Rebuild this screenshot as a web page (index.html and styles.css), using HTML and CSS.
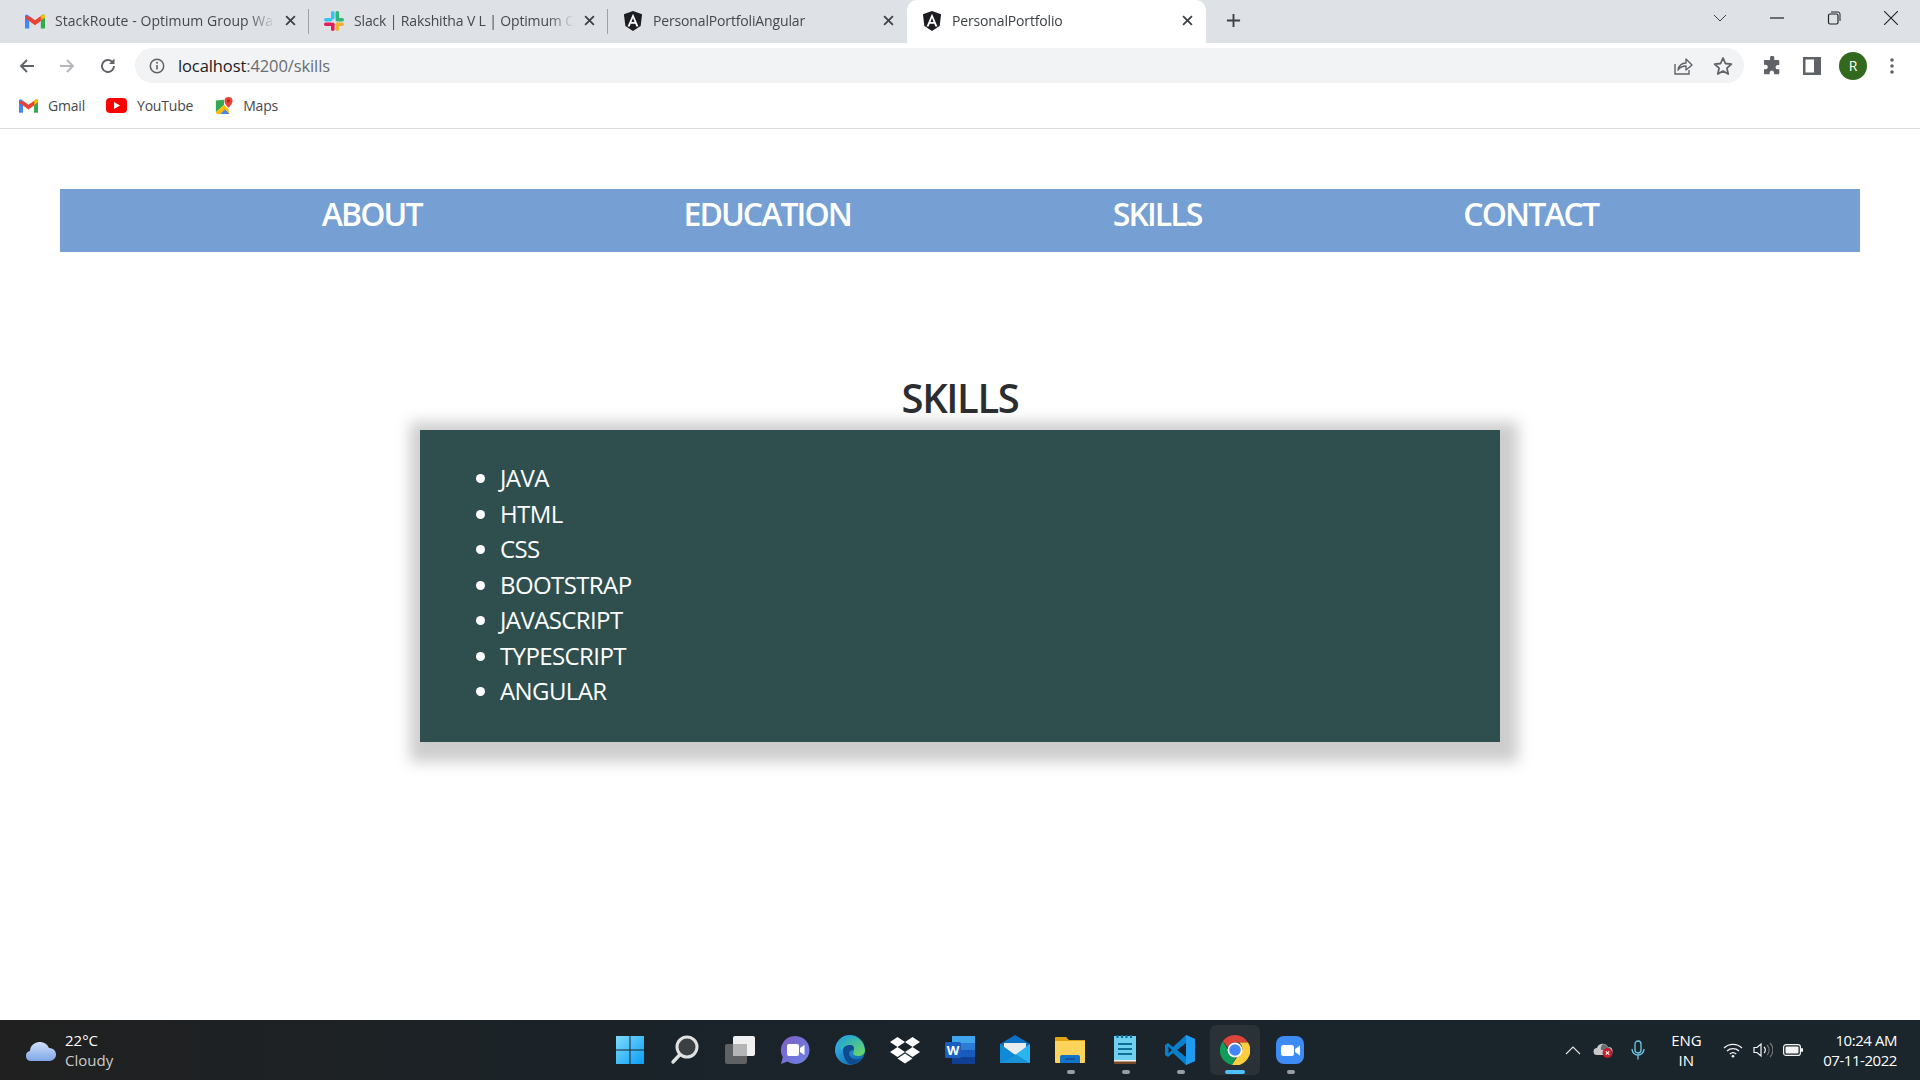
FILE: index.html
```html
<!DOCTYPE html>
<html lang="en">
<head>
  <meta charset="UTF-8" />
  <title>PersonalPortfolio</title>
  <link rel="stylesheet" href="styles.css">
</head>
<body>

<!-- Browser chrome -->
<div class="tabstrip">
  <div class="tab">
    <svg class="favicon" viewBox="0 0 24 18"><path fill="#4285F4" d="M0 18V3a2 2 0 0 1 3-1.6L5 3v15z"/><path fill="#34A853" d="M19 18V3l2-1.6A2 2 0 0 1 24 3v15z"/><path fill="#EA4335" d="M0 3l5 1 7 5 7-5 5-1-1 3-11 8L1 6z"/><path fill="#EA4335" d="M5 3l7 5 7-5v4l-7 5-7-5z"/><path fill="#FBBC04" d="M19 3l2-1.600A2 2 0 0 1 24 3v2l-5 3.500z"/></svg>
    <span class="tab-title">StackRoute - Optimum Group Wa</span>
    <svg class="tab-close" viewBox="0 0 10 10"><path d="M1 1l8 8M9 1L1 9"/></svg>
  </div>
  <div class="tab">
    <svg class="favicon" viewBox="0 0 20 20"><rect x="7" y="0" width="3.600" height="8.500" rx="1.800" fill="#36C5F0"/><rect x="0" y="7" width="8.500" height="3.600" rx="1.800" fill="#36C5F0"/><rect x="11.500" y="0" width="3.600" height="8.500" rx="1.800" fill="#2EB67D"/><rect x="11.500" y="7" width="8.500" height="3.600" rx="1.800" fill="#2EB67D"/><rect x="11.500" y="11.500" width="3.600" height="8.500" rx="1.800" fill="#ECB22E"/><rect x="11.500" y="11.500" width="8.500" height="3.600" rx="1.800" fill="#ECB22E"/><rect x="7" y="11.500" width="3.600" height="8.500" rx="1.800" fill="#E01E5A"/><rect x="0" y="11.500" width="8.500" height="3.600" rx="1.800" fill="#E01E5A"/></svg>
    <span class="tab-title">Slack | Rakshitha V L | Optimum C</span>
    <svg class="tab-close" viewBox="0 0 10 10"><path d="M1 1l8 8M9 1L1 9"/></svg>
  </div>
  <div class="tab">
    <svg class="favicon" viewBox="0 0 20 22"><path fill="#1b1d21" d="M10 0l10 3.500-1.600 13L10 22l-8.400-5.500L0 3.500z"/><path fill="#fff" d="M10 3L4 17h2.300l1.200-3h5l1.200 3H16zM8.300 12L10 7.800 11.700 12z"/></svg>
    <span class="tab-title">PersonalPortfoliAngular</span>
    <svg class="tab-close" viewBox="0 0 10 10"><path d="M1 1l8 8M9 1L1 9"/></svg>
  </div>
  <div class="tab active">
    <svg class="favicon" viewBox="0 0 20 22"><path fill="#1b1d21" d="M10 0l10 3.500-1.600 13L10 22l-8.400-5.500L0 3.500z"/><path fill="#fff" d="M10 3L4 17h2.300l1.200-3h5l1.200 3H16zM8.300 12L10 7.800 11.700 12z"/></svg>
    <span class="tab-title">PersonalPortfolio</span>
    <svg class="tab-close" viewBox="0 0 10 10"><path d="M1 1l8 8M9 1L1 9"/></svg>
  </div>
  <svg class="new-tab" viewBox="0 0 16 16"><path d="M8 1v14M1 8h14" stroke="#3c4043" stroke-width="2" fill="none"/></svg>
  <div class="window-controls">
    <svg viewBox="0 0 14 14" class="win-chevron"><path d="M1 4l6 6 6-6" fill="none" stroke="#3c4043"/></svg>
    <svg viewBox="0 0 14 14" class="win-min"><path d="M0 7h14" fill="none" stroke="#222" stroke-width="1.200"/></svg>
    <svg viewBox="0 0 14 14" class="win-max"><rect x="1.500" y="3" width="9.500" height="10" rx="1.500" fill="none" stroke="#222" stroke-width="1.200"/><path d="M4 1h7a2 2 0 0 1 2 2v7" fill="none" stroke="#222"/></svg>
    <svg viewBox="0 0 14 14" class="win-close"><path d="M0 0l14 14M14 0L0 14" fill="none" stroke="#222" stroke-width="1.100"/></svg>
  </div>
</div>

<div class="toolbar">
  <svg class="tool" viewBox="0 0 18 18"><path d="M16 9H3M9 3L3 9l6 6" fill="none" stroke="#5f6368" stroke-width="1.900"/></svg>
  <svg class="tool" viewBox="0 0 18 18"><path d="M2 9h13M9 3l6 6-6 6" fill="none" stroke="#b4b6b9" stroke-width="1.900"/></svg>
  <svg class="tool" viewBox="0 0 18 18"><path d="M15 9a6 6 0 1 1-1.800-4.300" fill="none" stroke="#5f6368" stroke-width="1.900"/><path d="M15.500 1.500v5.500H10z" fill="#5f6368"/></svg>
  <div class="omnibox">
    <svg class="info" viewBox="0 0 16 16"><circle cx="8" cy="8" r="6.700" fill="none" stroke="#5f6368" stroke-width="1.500"/><path d="M8 7v4.500" stroke="#5f6368" stroke-width="1.600"/><circle cx="8" cy="4.800" r="1" fill="#5f6368"/></svg>
    <span class="url"><span class="url-host">localhost</span>:4200/skills</span>
    <svg class="omni-icon" viewBox="0 0 20 20"><path d="M2 8v10h14v-4" fill="none" stroke="#5f6368" stroke-width="1.400"/><path d="M5 14c1-5 4-7 8-7V3l6 6-6 5v-4c-3 0-6 1-8 4z" fill="none" stroke="#5f6368" stroke-width="1.400" stroke-linejoin="round"/></svg>
    <svg class="omni-icon star" viewBox="0 0 20 20"><path d="M10 2l2.400 5.500 6 .6-4.500 4 1.300 5.900L10 15l-5.200 3 1.300-5.900-4.500-4 6-.6z" fill="none" stroke="#5f6368" stroke-width="1.800" stroke-linejoin="round"/></svg>
  </div>
  <svg class="action puzzle" viewBox="0 0 20 20"><path fill="#5f6368" d="M8 1.500a2.200 2.200 0 0 1 4.300 0V4h4a1 1 0 0 1 1 1v4h-2a2.200 2.200 0 0 0 0 4.300h2v4a1 1 0 0 1-1 1H12v-2a2.200 2.200 0 0 0-4.300 0v2H3a1 1 0 0 1-1-1v-4h1.500a2.300 2.300 0 0 0 0-4.600H2V5a1 1 0 0 1 1-1h5z"/></svg>
  <svg class="action panel" viewBox="0 0 18 18"><path fill="#5f6368" fill-rule="evenodd" d="M0 0h18v18H0zM2.500 2.500v13h8.500v-13z"/></svg>
  <div class="avatar">R</div>
  <svg class="action dots" viewBox="0 0 4 18"><circle cx="2" cy="3" r="1.800" fill="#5f6368"/><circle cx="2" cy="9" r="1.800" fill="#5f6368"/><circle cx="2" cy="15" r="1.800" fill="#5f6368"/></svg>
</div>

<div class="bookmarks">
  <div class="bookmark bm-gmail">
    <svg viewBox="0 0 24 18" class="bm-icon"><path fill="#4285F4" d="M0 18V3a2 2 0 0 1 3-1.600L5 3v15z"/><path fill="#34A853" d="M19 18V3l2-1.600A2 2 0 0 1 24 3v15z"/><path fill="#EA4335" d="M0 3l5 1 7 5 7-5 5-1-1 3-11 8L1 6z"/><path fill="#EA4335" d="M5 3l7 5 7-5v4l-7 5-7-5z"/><path fill="#FBBC04" d="M19 3l2-1.600A2 2 0 0 1 24 3v2l-5 3.500z"/></svg>
    Gmail
  </div>
  <div class="bookmark bm-youtube">
    <svg viewBox="0 0 21 15" class="bm-icon yt"><rect width="21" height="15" rx="4" fill="#f00"/><path d="M8 4l6 3.500L8 11z" fill="#fff"/></svg>
    YouTube
  </div>
  <div class="bookmark bm-maps">
    <svg viewBox="0 0 20 20" class="bm-icon maps"><path fill="#34A853" d="M1 4l9-1v6L1 17z"/><path fill="#FBBC04" d="M1 17l9-8 5 5 1 5H2z"/><path fill="#4285F4" d="M6 19l5-5 5 5z"/><path fill="#EA4335" d="M15 0a4.500 4.500 0 0 1 4.500 4.500C19.500 8 15 12 15 12s-4.500-4-4.500-7.500A4.500 4.500 0 0 1 15 0z"/><circle cx="15" cy="4.500" r="1.600" fill="#a3261b"/></svg>
    Maps
  </div>
</div>

<!-- Page content -->
<main class="content">
  <nav class="navbar">
    <a>ABOUT</a>
    <a>EDUCATION</a>
    <a>SKILLS</a>
    <a>CONTACT</a>
  </nav>

  <h1 class="section-title">SKILLS</h1>
  <div class="card">
    <ul>
      <li>JAVA</li>
      <li>HTML</li>
      <li>CSS</li>
      <li>BOOTSTRAP</li>
      <li>JAVASCRIPT</li>
      <li>TYPESCRIPT</li>
      <li>ANGULAR</li>
    </ul>
  </div>
</main>

<!-- Windows taskbar -->
<footer class="taskbar">
  <div class="weather">
    <svg class="weather-icon" viewBox="0 0 30 19"><defs><linearGradient id="cloud" x1="0" y1="0" x2="0" y2="1"><stop offset="0" stop-color="#cfe0fa"/><stop offset="1" stop-color="#7ea6e6"/></linearGradient></defs><path fill="url(#cloud)" d="M5 19a5 5 0 0 1-1-9.900A10 9 0 0 1 15 0a10 9 0 0 1 8 6 6.500 6.500 0 0 1 1 13z"/></svg>
    <div class="weather-text"><div>22°C</div><div class="weather-desc">Cloudy</div></div>
  </div>

  <div class="task-icons">
    <div class="slot">
      <svg viewBox="0 0 30 30"><defs><linearGradient id="win" x1="0" y1="0" x2="1" y2="1"><stop offset="0" stop-color="#7fdcfb"/><stop offset="1" stop-color="#0a9cf5"/></linearGradient></defs><path fill="url(#win)" d="M1 1h13.500v13.500H1zM15.500 1H29v13.500H15.500zM1 15.500h13.500V29H1zM15.500 15.500H29V29H15.500z"/></svg>
    </div>
    <div class="slot">
      <svg viewBox="0 0 30 30"><circle cx="17" cy="12" r="10" fill="#3a4044" stroke="#dfe1e2" stroke-width="3"/><path d="M9.500 20L3 27" stroke="#dfe1e2" stroke-width="3.400" stroke-linecap="round"/></svg>
    </div>
    <div class="slot">
      <svg viewBox="0 0 30 30"><rect x="0" y="9" width="22" height="20" rx="2" fill="#5f6163"/><rect x="8" y="1" width="22" height="20" rx="2" fill="#f0f0f0"/><rect x="8" y="9" width="14" height="12" fill="#b4b5b6"/></svg>
    </div>
    <div class="slot">
      <svg viewBox="0 0 30 30"><defs><linearGradient id="chat" x1="0" y1="0" x2="1" y2="1"><stop offset="0" stop-color="#7f5ec6"/><stop offset="1" stop-color="#6a85e4"/></linearGradient></defs><path fill="url(#chat)" d="M15.500 1a14 14 0 1 1-8 25.500L1 29l1.800-7A14 14 0 0 1 15.500 1z"/><rect x="7" y="9" width="12" height="12" rx="2" fill="#fff"/><path d="M20 13l4.500-3v10L20 17z" fill="#fff"/></svg>
    </div>
    <div class="slot">
      <svg viewBox="0 0 30 30"><defs><linearGradient id="edge1" x1="0" y1="0" x2="1" y2="1"><stop offset="0" stop-color="#35c1f1"/><stop offset="1" stop-color="#0c59a4"/></linearGradient><linearGradient id="edge2" x1="0" y1="0" x2="1" y2="1"><stop offset="0" stop-color="#1b9de2"/><stop offset="1" stop-color="#6fdc5c"/></linearGradient></defs><circle cx="15" cy="15" r="15" fill="url(#edge1)"/><path fill="url(#edge2)" d="M3 7a15 15 0 0 1 27 8c0 4-3 6-7 6-3 0-5-1-5-3 2-2 1-7-4-7-5 0-7 3-8 5 0-4-2-7-3-9z"/><path fill="#0f4c8f" d="M8 16c0-4 3-6 7-6 3 0 5 2 3.500 5-3.500 0-6 3-3 7 2 3 8 3 11 1-3 5-8 7-12 6-4-2-6-8-6.500-13z"/></svg>
    </div>
    <div class="slot">
      <svg viewBox="0 0 30 30"><path fill="#fff" d="M7.500 2L15 7 7.500 12 0 7zM22.500 2L30 7l-7.500 5L15 7zM7.500 12L15 17l-7.500 5L0 17zM22.500 12L30 17l-7.500 5L15 17zM15 18.500l7.500 5L15 28.500l-7.500-5z"/></svg>
    </div>
    <div class="slot">
      <svg viewBox="0 0 30 30"><rect x="7" y="1" width="23" height="28" rx="1.500" fill="#2b7cd3"/><rect x="7" y="1" width="23" height="7" fill="#41a5ee"/><rect x="7" y="15" width="23" height="7" fill="#185abd"/><rect x="7" y="22" width="23" height="7" fill="#103f91"/><rect x="0" y="7" width="16" height="16" rx="1.500" fill="#1a5fbf"/><text x="8" y="20" class="word-letter">W</text></svg>
    </div>
    <div class="slot">
      <svg viewBox="0 0 30 30"><path fill="#0c70c4" d="M0 9L15 0l15 9v4H0z"/><path fill="#e9ecef" d="M4 8h22v8l-11 6-11-6z"/><path fill="#2bb5ef" d="M0 9l15 11L30 9v19H0z"/><path fill="#0f8ad8" d="M0 28V9l15 11z"/><path fill="#0a6fc0" d="M0 28h30L15 19z" opacity=".5"/></svg>
    </div>
    <div class="slot open">
      <svg viewBox="0 0 30 30"><path fill="#e0a413" d="M0 3a1 1 0 0 1 1-1h10l3 3h16v4H0z"/><path fill="#fcd35b" d="M0 6h30v21a1 1 0 0 1-1 1H1a1 1 0 0 1-1-1z"/><path fill="#1173cc" d="M5 22a2 2 0 0 1 2-2h16a2 2 0 0 1 2 2v6H5z"/><path stroke="#0c4f90" stroke-width="1.500" d="M10 24h10"/></svg>
    </div>
    <div class="slot open">
      <svg viewBox="0 0 22 30" class="notepad"><rect x="0" y="1" width="22" height="27" fill="#6fd0ef"/><rect x="0" y="26" width="22" height="3" fill="#7b4a26"/><rect x="0" y="25" width="22" height="1.500" fill="#f2f2f2"/><path stroke="#0b6c96" stroke-width="2" d="M3.500 0v3M8 0v3M12.500 0v3M17 0v3"/><path stroke="#0e7099" stroke-width="1.800" d="M4 9h14M4 14h14M4 19h14"/></svg>
    </div>
    <div class="slot open">
      <svg viewBox="0 0 30 30"><path fill="#0a7fcb" d="M21 0l9 4v22l-9 4L8 18l-5 4-3-2v-10l3-2 5 4z"/><path fill="#1f9cf0" d="M21 0l9 4v22l-9 4z"/><path fill="#17222a" d="M3.500 11.500v7L7 15zM21 8l-9 7 9 7z"/></svg>
    </div>
    <div class="slot active">
      <svg viewBox="0 0 30 30"><path fill="#db4437" d="M15 0a15 15 0 0 1 13 7.500H15a7.500 7.500 0 0 0-7 5L2.800 6.300A15 15 0 0 1 15 0z"/><path fill="#0f9d58" d="M2.800 6.300L9 16.500a7.500 7.500 0 0 0 7 6L12 30A15 15 0 0 1 2.800 6.300z"/><path fill="#ffcd40" d="M28 7.500A15 15 0 0 1 12 30l6-9.500a7.500 7.500 0 0 0 1-13z"/><circle cx="15" cy="15" r="7.500" fill="#fff"/><circle cx="15" cy="15" r="5.800" fill="#4285f4"/></svg>
    </div>
    <div class="slot open">
      <svg viewBox="0 0 30 30"><rect width="28" height="28" x="1" y="1" rx="8" fill="#3d8bf5"/><rect x="6" y="10" width="13" height="11" rx="2.500" fill="#fff"/><path d="M20 14l5-3.500v10L20 17z" fill="#fff"/></svg>
    </div>
  </div>

  <div class="tray">
    <svg class="tray-chevron" viewBox="0 0 16 9"><path d="M1 8l7-7 7 7" fill="none" stroke="#e6e6e6" stroke-width="1.100"/></svg>
    <svg class="tray-cloud" viewBox="0 0 20 16"><path fill="#c9c9c9" d="M4 13a3.500 3.500 0 0 1 0-7 6 6 0 0 1 11-1 4 4 0 0 1 1 8z"/><path fill="#6b6f72" d="M10 2a6 6 0 0 1 5 3 4 4 0 0 1 3 3H8a6 6 0 0 1 2-6z"/><circle cx="14.500" cy="11" r="5" fill="#c4202f"/><path d="M12.800 9.300l3.400 3.400M16.200 9.300l-3.400 3.400" stroke="#fff" stroke-width="1.100"/></svg>
    <svg class="tray-mic" viewBox="0 0 14 20"><rect x="4" y="1" width="6" height="12" rx="3" fill="none" stroke="#6fc8e8" stroke-width="1.300"/><path d="M1 9a6 6 0 0 0 12 0M7 15v4.500" fill="none" stroke="#6fc8e8" stroke-width="1.300"/></svg>
    <div class="lang">ENG<br>IN</div>
    <svg class="tray-wifi" viewBox="0 0 20 16"><path d="M1 6a13 13 0 0 1 18 0M4 9a9 9 0 0 1 12 0M6.800 12a5 5 0 0 1 6.400 0" fill="none" stroke="#f4f4f4" stroke-width="1.300"/><circle cx="10" cy="14.300" r="1.300" fill="#f4f4f4"/></svg>
    <svg class="tray-sound" viewBox="0 0 20 16"><path d="M1 5.500h3l4-3.500v12l-4-3.500H1z" fill="none" stroke="#f4f4f4" stroke-width="1.200"/><path d="M11 5a4 4 0 0 1 0 6" fill="none" stroke="#f4f4f4" stroke-width="1.200"/><path d="M14 3a7 7 0 0 1 0 10M17 1a10 10 0 0 1 0 14" fill="none" stroke="#777" stroke-width="1.100"/></svg>
    <svg class="tray-battery" viewBox="0 0 20 12"><rect x=".6" y=".6" width="16.800" height="10.800" rx="2.500" fill="none" stroke="#f4f4f4" stroke-width="1.200"/><rect x="2.500" y="2.500" width="13" height="7" rx="1" fill="#f4f4f4"/><rect x="18" y="4" width="2" height="4" rx="1" fill="#f4f4f4"/></svg>
    <div class="clock">10:24 AM<br>07-11-2022</div>
  </div>
</footer>

</body>
</html>
```

FILE: styles.css
```css
* {
  box-sizing: border-box;
}
body {
  margin: 0;
  height: 1080px;
  overflow: hidden;
  display: flex;
  flex-direction: column;
  background: #fff;
  font-family: "Open Sans", "Noto Sans", sans-serif;
}

/* tab strip */
.tabstrip {
  height: 43px;
  background: #dee1e6;
  display: flex;
  padding-left: 10px;
}
.tab {
  width: 299px;
  height: 43px;
  padding: 0 11px 2px 15px;
  display: flex;
  align-items: center;
  gap: 10px;
  font-size: 14px;
  letter-spacing: -0.15px;
  color: #45494d;
  position: relative;
}
.tab:nth-child(-n+2)::after {
  content: "";
  position: absolute;
  right: 0;
  top: 9px;
  height: 25px;
  width: 1px;
  background: #9ea1a5;
}
.tab.active {
  background: #fff;
  border-radius: 10px 10px 0 0;
  color: #3c4043;
}
.favicon {
  width: 20px;
  height: 20px;
  flex: none;
}
.tab-title {
  flex: 1;
  white-space: nowrap;
  overflow: hidden;
  -webkit-mask-image: linear-gradient(to right, #000 88%, transparent);
}
.tab:first-child .tab-title {
  letter-spacing: 0.05px;
}
.tab-close {
  flex: none;
  width: 11px;
  height: 11px;
  fill: none;
  stroke: #3c4043;
  stroke-width: 1.600;
  margin-right: 2px;
}
.new-tab {
  width: 15px;
  height: 15px;
  margin: 13px 0 0 20px;
}
.window-controls {
  margin-left: auto;
  display: flex;
  align-items: center;
  height: 36px;
  padding-right: 22px;
  gap: 43px;
}
.window-controls svg {
  width: 14px;
  height: 14px;
}

/* toolbar */
.toolbar {
  height: 45px;
  display: flex;
  align-items: center;
  padding-left: 18px;
  padding-right: 26px;
  background: #fff;
}
.tool {
  width: 18px;
  height: 18px;
  margin-right: 22px;
}
.tool:nth-child(2) {
  margin-right: 23px;
}
.tool:nth-child(3) {
  margin-right: 18px;
}
.omnibox {
  width: 1610px;
  height: 35px;
  border-radius: 18px;
  background: #f1f3f4;
  display: flex;
  align-items: center;
  padding: 0 9px 0 14px;
}
.info {
  width: 16px;
  height: 16px;
  margin-right: 13px;
}
.url {
  font-size: 16.500px;
  letter-spacing: -0.1px;
  color: #6a6d71;
  flex: 1;
}
.url-host {
  color: #202124;
}
.omni-icon {
  width: 20px;
  height: 20px;
  margin-right: 20px;
}
.omni-icon.star {
  margin-right: 2px;
}
.action {
  width: 20px;
  height: 20px;
}
.puzzle {
  margin-left: 18px;
}
.panel {
  width: 18px;
  height: 18px;
  margin-left: 21px;
}
.avatar {
  width: 28px;
  height: 28px;
  border-radius: 50%;
  margin-left: 18px;
  background: #33691e;
  color: #fff;
  font-size: 14px;
  display: flex;
  align-items: center;
  justify-content: center;
}
.dots {
  width: 4px;
  margin-left: 23px;
}

/* bookmarks bar */
.bookmarks {
  height: 41px;
  display: flex;
  align-items: center;
  padding: 0 0 5px 19px;
  border-bottom: 1px solid #dadce0;
  font-size: 14px;
  letter-spacing: -0.2px;
  color: #45494d;
}
.bookmark {
  display: flex;
  align-items: center;
  gap: 10px;
}
.bm-icon {
  width: 19px;
  height: 15px;
}
.yt {
  width: 21px;
}
.maps {
  width: 18px;
  height: 18px;
}
.bm-youtube {
  margin-left: 21px;
}
.bm-maps {
  margin-left: 22px;
}

/* page */
.content {
  flex: 1;
  padding: 60px 60px 0;
}
.navbar {
  height: 63px;
  background: #769fd3;
  display: flex;
  justify-content: space-evenly;
  align-items: flex-start;
  padding-top: 1px;
}
.navbar a {
  color: #fff;
  font-size: 32px;
  line-height: 48px;
  font-weight: 600;
  letter-spacing: -1.900px;
}
.section-title {
  margin: 122px 0 8px;
  text-align: center;
  font-size: 40px;
  line-height: 48px;
  font-weight: 600;
  letter-spacing: -1.400px;
  color: #2b2d31;
}
.card {
  width: 1080px;
  height: 312px;
  margin: 0 auto;
  padding: 30px 40px 0;
  background: #2f4f4f;
  box-shadow: 4px 6px 14px 14px rgba(0, 0, 0, 0.2);
  color: #fff;
}
.card ul {
  margin: 0;
  padding-left: 40px;
  font-size: 24px;
  line-height: 35.500px;
  letter-spacing: -0.6px;
}

/* taskbar */
.taskbar {
  height: 60px;
  flex: none;
  display: grid;
  grid-template-columns: 1fr auto 1fr;
  background: linear-gradient(to right, #202020, #1a2329 35%, #1a252c);
  color: #fff;
  font-size: 15px;
  line-height: 20px;
}
.weather {
  display: flex;
  align-items: center;
  padding-left: 26px;
  gap: 9px;
}
.weather-icon {
  width: 30px;
  height: 19px;
  margin-top: 2px;
}
.weather-desc {
  color: #ccc;
}
.task-icons {
  display: flex;
  align-items: center;
}
.slot {
  width: 55px;
  height: 50px;
  display: flex;
  align-items: center;
  justify-content: center;
  position: relative;
  border-radius: 6px;
}
.slot svg {
  width: 30px;
  height: 30px;
}
.slot svg.notepad {
  width: 22px;
}
.slot.open::after,
.slot.active::after {
  content: "";
  position: absolute;
  bottom: 1px;
  left: 24px;
  width: 8px;
  height: 4px;
  border-radius: 2px;
  background: #9a9ea1;
}
.slot.active {
  background: #2a3137;
  width: 50px;
  margin: 0 2.500px;
}
.slot.active::after {
  left: 15px;
  width: 20px;
  background: #4cc2ff;
}
.word-letter {
  font-size: 13px;
  font-weight: 700;
  fill: #fff;
  text-anchor: middle;
}
.tray {
  display: flex;
  align-items: center;
  justify-content: flex-end;
  padding-right: 23px;
}
.tray-chevron {
  width: 16px;
  height: 9px;
  margin-right: 12px;
}
.tray-cloud {
  width: 20px;
  height: 16px;
  margin-right: 18px;
}
.tray-mic {
  width: 14px;
  height: 20px;
  margin-right: 26px;
}
.lang {
  text-align: center;
  width: 30px;
  margin-right: 22px;
}
.tray-wifi,
.tray-sound {
  width: 20px;
  height: 16px;
  margin-right: 10px;
}
.tray-battery {
  width: 20px;
  height: 12px;
  margin-right: 20px;
}
.clock {
  text-align: right;
  letter-spacing: -0.45px;
}
```
